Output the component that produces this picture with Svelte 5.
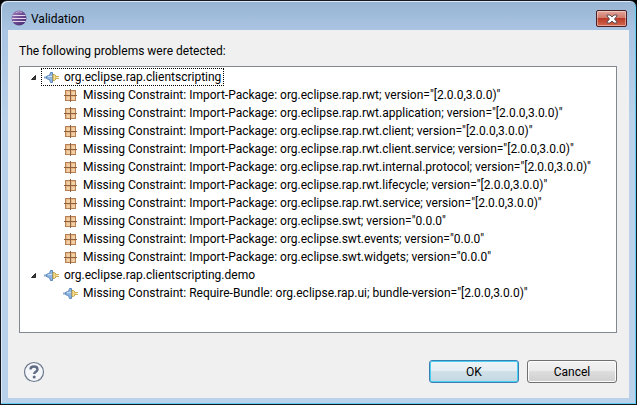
<script lang="ts">
  type Problem = { kind: 'package' | 'bundle'; text: string };
  type Bundle = { name: string; open: boolean; problems: Problem[] };

  const pkg = (name: string, version: string): Problem => ({
    kind: 'package',
    text: `Missing Constraint: Import-Package: ${name}; version="${version}"`,
  });

  let bundles: Bundle[] = $state([
    {
      name: 'org.eclipse.rap.clientscripting',
      open: true,
      problems: [
        pkg('org.eclipse.rap.rwt', '[2.0.0,3.0.0)'),
        pkg('org.eclipse.rap.rwt.application', '[2.0.0,3.0.0)'),
        pkg('org.eclipse.rap.rwt.client', '[2.0.0,3.0.0)'),
        pkg('org.eclipse.rap.rwt.client.service', '[2.0.0,3.0.0)'),
        pkg('org.eclipse.rap.rwt.internal.protocol', '[2.0.0,3.0.0)'),
        pkg('org.eclipse.rap.rwt.lifecycle', '[2.0.0,3.0.0)'),
        pkg('org.eclipse.rap.rwt.service', '[2.0.0,3.0.0)'),
        pkg('org.eclipse.swt', '0.0.0'),
        pkg('org.eclipse.swt.events', '0.0.0'),
        pkg('org.eclipse.swt.widgets', '0.0.0'),
      ],
    },
    {
      name: 'org.eclipse.rap.clientscripting.demo',
      open: true,
      problems: [
        {
          kind: 'bundle',
          text: 'Missing Constraint: Require-Bundle: org.eclipse.rap.ui; bundle-version="[2.0.0,3.0.0)"',
        },
      ],
    },
  ]);

  let focused = $state(0);
</script>

{#snippet bundleIcon()}
  <svg class="icon" viewBox="0 0 16 16" aria-hidden="true">
    <path d="M0 8.500h3" stroke="#8ba9cf" stroke-width="2" />
    <path d="M2.500 7.500l2-1h1l1-3h2v10h-2l-1-3h-1l-2-1z" fill="#8fb6e2" stroke="#5c88bd" />
    <path d="M4 7.500h4" stroke="#c9dff5" />
    <path d="M9 5.500h1.500l1.500 1.500v3l-1.500 1.500H9z" fill="#f7e08f" stroke="#c2a04c" />
    <path d="M12 7.500h3M12 9.500h3" stroke="#d0ac52" />
    <path d="M12 8.500h2" stroke="#fbe7a0" />
  </svg>
{/snippet}

{#snippet packageIcon()}
  <svg class="icon" viewBox="0 0 16 16" aria-hidden="true">
    <rect x="2.500" y="3.500" width="10" height="10" fill="#e9b988" stroke="#b58056" />
    <path d="M4 5h3v3H4zM9 5h3v3H9zM4 10h3v3H4zM9 10h3v3H9z" fill="#f3cfa4" />
    <path d="M7.500 2v13M1 8.500h13" stroke="#8d6040" />
  </svg>
{/snippet}

<div class="window" role="dialog" aria-labelledby="dialog-title">
  <header class="titlebar">
    <svg class="logo" viewBox="0 0 16 16" aria-hidden="true">
      <defs>
        <linearGradient id="globe" x1="0" y1="0" x2="1" y2="1">
          <stop offset="0" stop-color="#a58bc0" />
          <stop offset="0.5" stop-color="#6b4a90" />
          <stop offset="1" stop-color="#42296a" />
        </linearGradient>
      </defs>
      <circle cx="8" cy="8" r="7.500" fill="url(#globe)" />
      <path d="M1.500 5.500h13M1 8.500h14M1.500 11.500h13" stroke="#e3d6ee" />
      <path d="M5 2.500q3-1.500 6 0" fill="none" stroke="#bda8d1" />
    </svg>
    <h1 id="dialog-title">Validation</h1>
    <button class="close" aria-label="Close">
      <svg viewBox="0 0 12 10" aria-hidden="true">
        <path d="M1 1h3l2 2 2-2h3v1L8.500 5 11 8v1H8L6 7 4 9H1V8l2.500-3L1 2z" fill="#fff" stroke="#5c4a52" />
      </svg>
    </button>
  </header>

  <main class="content">
    <p class="message">The following problems were detected:</p>

    <ul class="tree">
      {#each bundles as bundle, i}
        <li>
          <div class="row">
            <button
              class="expander"
              aria-label={`Toggle ${bundle.name}`}
              aria-expanded={bundle.open}
              onclick={() => (bundle.open = !bundle.open)}
            >
              <svg viewBox="0 0 8 8" class:closed={!bundle.open} aria-hidden="true">
                <path d="M6.500 2.500v4h-4z" fill="#404040" stroke="#262626" />
              </svg>
            </button>
            <button class="label" class:focused={focused === i} onclick={() => (focused = i)}>
              {@render bundleIcon()}
              <span>{bundle.name}</span>
            </button>
          </div>
          {#if bundle.open}
            <ul class="problems">
              {#each bundle.problems as problem}
                <li class="label">
                  {#if problem.kind === 'package'}
                    {@render packageIcon()}
                  {:else}
                    {@render bundleIcon()}
                  {/if}
                  <span>{problem.text}</span>
                </li>
              {/each}
            </ul>
          {/if}
        </li>
      {/each}
    </ul>

    <footer class="actions">
      <button class="help" aria-label="Help">
        <svg viewBox="0 0 22 22" aria-hidden="true">
          <circle cx="11" cy="11" r="9.500" fill="#f4f6fa" stroke="#6b788d" stroke-width="1.200" />
          <path d="M7.500 8.500c0-4 7-4 7 0 0 2.300-3.300 2.200-3.300 4.500" fill="none" stroke="#5f6c84" stroke-width="2.400" />
          <circle cx="11.200" cy="16" r="1.500" fill="#5f6c84" />
        </svg>
      </button>
      <button class="btn primary">OK</button>
      <button class="btn">Cancel</button>
    </footer>
  </main>
</div>

<style>
  :global(body) {
    margin: 0;
    background: #000;
  }

  .window,
  button {
    font-family: Roboto, 'Open Sans', sans-serif;
    font-size: 12px;
    line-height: 18px;
    color: #000;
  }

  button {
    padding: 0;
    border: 0;
    background: none;
  }

  .window {
    box-sizing: border-box;
    min-height: 100vh;
    padding: 0 7px 6px;
    display: flex;
    flex-direction: column;
    border: 1px solid #16181c;
    border-radius: 7px 7px 0 0;
    background: linear-gradient(#98b4d4, #a9c5e3 30px, #b9d1ea 120px);
    box-shadow:
      inset -1px -1px #5fcdf0,
      inset 1px 1px #dcebf9;
  }

  .titlebar {
    height: 29px;
    display: flex;
    align-items: center;
    gap: 4px;
    padding: 0 2px 0 3px;
  }

  .logo {
    width: 16px;
    height: 16px;
    margin-top: 4px;
  }

  .titlebar h1 {
    flex: 1;
    margin: 6px 0 0;
    font-size: 12px;
    font-weight: 400;
  }

  .close {
    box-sizing: border-box;
    width: 31px;
    height: 17px;
    margin-top: 6px;
    display: flex;
    align-items: center;
    justify-content: center;
    border: 1px solid #4b1f25;
    border-radius: 2px;
    background: linear-gradient(#e3a59a, #d27a6c 45%, #b93b27 50%, #d4674e);
    box-shadow: inset 0 0 0 1px rgba(255, 255, 255, 0.4);
  }

  .close svg {
    width: 12px;
    height: 10px;
  }

  .content {
    flex: 1;
    display: flex;
    flex-direction: column;
    padding: 12px 12px 15px 11px;
    background: #f0f0f0;
  }

  .message {
    margin: 0 0 6px;
  }

  .tree,
  .problems {
    margin: 0;
    padding: 0;
    list-style: none;
  }

  .tree {
    flex: 1;
    padding: 1px 9px;
    border: 1px solid #828790;
    background: #fff;
  }

  .row {
    display: flex;
  }

  .expander {
    width: 12px;
    height: 18px;
    display: flex;
    align-items: center;
  }

  .expander svg {
    width: 8px;
    height: 8px;
  }

  .expander svg.closed {
    transform: rotate(-45deg);
  }

  .label {
    box-sizing: border-box;
    height: 18px;
    display: flex;
    align-items: center;
    gap: 4px;
    padding: 0 2px;
    border: 1px solid transparent;
    line-height: 16px;
    white-space: nowrap;
  }

  .label.focused {
    border: 1px dotted #000;
  }

  .problems {
    padding-left: 31px;
  }

  .icon {
    flex: none;
    width: 16px;
    height: 16px;
  }

  .actions {
    display: flex;
    align-items: center;
    gap: 8px;
    padding: 27px 0 0 4px;
  }

  .help {
    width: 22px;
    height: 22px;
    margin-right: auto;
  }

  .help svg {
    display: block;
  }

  .btn {
    box-sizing: border-box;
    width: 90px;
    height: 23px;
    border: 1px solid #707070;
    border-radius: 3px;
    background: linear-gradient(#f2f2f2, #ebebeb 50%, #dddddd 50%, #cfcfcf);
    box-shadow: inset 0 0 0 1px #fcfcfc;
  }

  .btn.primary {
    border-color: #3c7fb1;
    background: linear-gradient(#eef4f7, #e2edf2 50%, #d0e0e8 50%, #c3d7e2);
    box-shadow: inset 0 0 0 1px #48d0f4;
  }
</style>
